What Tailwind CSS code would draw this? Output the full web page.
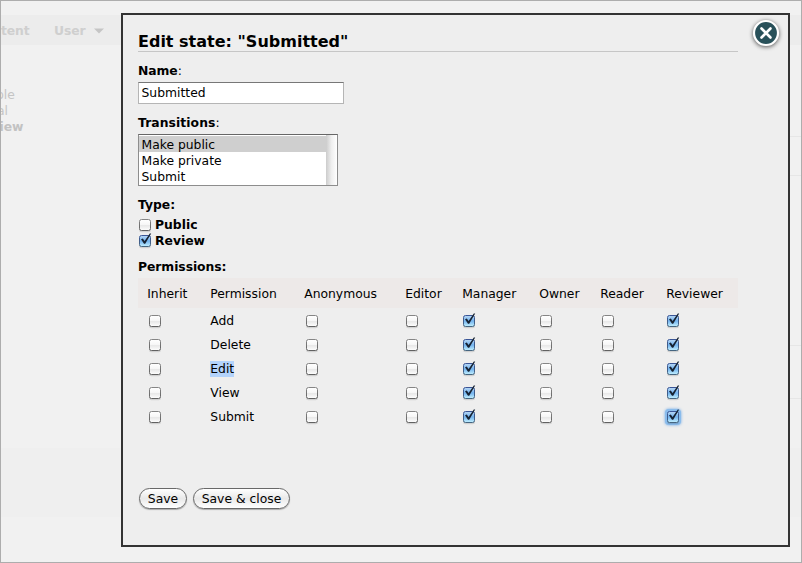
<!DOCTYPE html>
<html lang="en"><head><meta charset="utf-8"><title>Edit state</title>
<script src="https://cdn.jsdelivr.net/npm/@tailwindcss/browser@4"></script></head>
<body class="w-[802px] h-[563px] overflow-hidden bg-[#f1f1f1] text-black text-[12.35px] leading-4 font-['DejaVu_Sans',Verdana,sans-serif]">
<svg class="absolute w-0 h-0">
 <defs>
  <linearGradient id="gw" x2="0" y2="1"><stop offset="0" stop-color="#fff"/><stop offset=".45" stop-color="#f7f7f7"/><stop offset=".55" stop-color="#e8e8e8"/><stop offset="1" stop-color="#fff"/></linearGradient>
  <linearGradient id="gb" x2="0" y2="1"><stop offset="0" stop-color="#b9d8f5"/><stop offset=".5" stop-color="#72b2ee"/><stop offset="1" stop-color="#c4f2ff"/></linearGradient>
  <linearGradient id="sw" x2="0" y2="1"><stop offset="0" stop-color="#858585"/><stop offset="1" stop-color="#616161"/></linearGradient>
  <linearGradient id="sb" x2="0" y2="1"><stop offset="0" stop-color="#3a5596"/><stop offset="1" stop-color="#456580"/></linearGradient>
 </defs>
 <symbol id="off" viewBox="0 0 16 16"><rect x="2" y="3.2" width="12" height="12" rx="2.5" fill="#000" opacity=".12"/><rect x="2.5" y="2.5" width="11" height="11" rx="2" fill="url(#gw)" stroke="url(#sw)"/></symbol>
 <symbol id="on" viewBox="0 0 16 16"><rect x="2" y="3.2" width="12" height="12" rx="2.5" fill="#000" opacity=".12"/><rect x="2.5" y="2.5" width="11" height="11" rx="2" fill="url(#gb)" stroke="url(#sb)"/><path d="M4 6.3 5.8 5.6 7.6 8 12.8 .4 14.2.4 8.2 10.8 7 10.8Z" fill="#172333"/></symbol>
</svg>
<div class="relative w-full h-full border border-[#adadad] overflow-hidden">
 <div class="h-[14px]"></div>
 <div class="h-[30px] bg-[#ececec] flex items-center pt-px font-bold text-[#cfcfcf]">
  <span class="w-[53px] tracking-[-0.1px]">tent</span><span class="w-[40px] tracking-[-0.1px]">User</span>
  <svg class="w-[10px] h-[6px]" viewBox="0 0 10 6"><path d="M0 .5H10L5 5.5Z" fill="#c5c5c5"/></svg>
 </div>
 <div class="h-[403px] pt-[42px] text-[#c5c5c5]">
  <div class="-ml-[5px]">ple</div><div class="-ml-[4px]">al</div><div class="-ml-[1.5px] font-bold text-[#c2c2c2] tracking-[-0.1px]">iew</div>
 </div>
 <div class="h-[69px] bg-[#efefef]"></div>
 <div class="absolute right-0 top-[14px] w-[12px] h-[30px] bg-[#ececec]"></div>
 <div class="absolute right-0 top-[135px] w-[12px] h-[40px] border-y border-[#e6e6e6]"></div>
 <div class="absolute right-0 top-[344px] w-[12px] h-[54px] border-y border-[#e6e6e6]"></div>

 <main class="absolute left-[120px] top-[12px] w-[669px] h-[534px] border-2 border-[#333] bg-[#eee] pl-[15px] pt-[15px]">
  <h1 class="w-[600px] h-[22px] border-b border-[#c6c6c6] font-bold text-[16px] leading-[24px] whitespace-nowrap">Edit state: "Submitted"</h1>
  <div class="mt-[11px] tracking-[-0.05px]"><b>Name</b>:</div>
  <div class="mt-[3px] w-[206px] h-[22px] bg-white border border-[#b5b5b5] border-t-[#777] pl-[2.5px] leading-[21px]">Submitted</div>
  <div class="mt-[11px] tracking-[0.08px]"><b>Transitions</b>:</div>
  <div class="mt-[3px] w-[200px] h-[52px] bg-white border border-[#8d8d8d] border-t-[#666] flex">
   <div class="grow pt-px"><div class="bg-[#cfcfcf] h-4 pl-[2.5px] leading-[18px]">Make public</div><div class="h-4 pl-[2.5px] leading-[18px]">Make private</div><div class="h-4 pl-[2.5px] leading-[18px]">Submit</div></div>
   <div class="w-[11px] bg-linear-to-r from-[#ccc] via-[#efefef] to-white"></div>
  </div>
  <div class="mt-[11px] font-bold">Type:</div>
  <div class="mt-[4px] -ml-px h-4 flex items-center font-bold"><svg class="w-4 h-4"><use href="#off"/></svg><span class="pl-[2px]">Public</span></div>
  <div class="-ml-px h-4 flex items-center font-bold"><svg class="w-4 h-4"><use href="#on"/></svg><span class="pl-[2px]">Review</span></div>
  <div class="mt-[10px] font-bold tracking-[-0.05px]">Permissions:</div>
  <div class="mt-[3px] w-[600px] h-[30px] bg-[#ede9e8] grid grid-cols-[63px_94px_101px_57px_77px_61px_66px_81px] items-center pt-px pl-[9.2px]">
   <span>Inherit</span><span>Permission</span><span>Anonymous</span><span>Editor</span><span>Manager</span><span>Owner</span><span>Reader</span><span>Reviewer</span>
  </div>
  <div id="rows"></div>
  <div class="mt-[60px] flex gap-[6px]">
   <button class="ml-px w-[48px] h-[21px] rounded-full border border-[#686868] bg-linear-to-b from-white via-[#e9e9e9] to-white shadow-[0_1px_1px_#aaa] leading-[19px] pt-px whitespace-nowrap">Save</button>
   <button class="w-[97px] h-[21px] rounded-full border border-[#686868] bg-linear-to-b from-white via-[#e9e9e9] to-white shadow-[0_1px_1px_#aaa] leading-[19px] pt-px whitespace-nowrap">Save &amp; close</button>
  </div>
 </main>
 <svg class="absolute left-[745px] top-[12px] w-[40px] h-[40px] drop-shadow-[0_1px_2px_rgba(0,0,0,.65)]" viewBox="0 0 40 40"><circle cx="20" cy="20" r="12" fill="#285059" stroke="#fff" stroke-width="2.2"/><path d="M15.5 15.5 24.5 24.5M24.5 15.5 15.5 24.5" stroke="#fff" stroke-width="2.6" stroke-linecap="round"/></svg>
</div>
<script>
document.getElementById('rows').innerHTML=['Add','Delete','Edit','View','Submit'].map((n,r)=>{
 const cell=c=>{const on=c===4||c===7;return '<svg class="w-4 h-4 mt-[2px]'+(r===4&&c===7?' rounded-[4px] bg-[#8abcec] shadow-[0_0_3px_#69a5e4]':'')+'"><use href="#'+(on?'on':'off')+'"/></svg>'};
 return '<div class="h-6 grid grid-cols-[63px_94px_100px_57px_77px_62px_65px_82px] items-center pl-[9px]">'+cell(0)+'<span class="pt-[2px] pl-[.3px]"><span class="'+(n==='Edit'?'bg-[#b3d3fb] py-px':'')+'">'+n+'</span></span>'+[2,3,4,5,6,7].map(cell).join('')+'</div>'}).join('');
</script>
</body></html>
